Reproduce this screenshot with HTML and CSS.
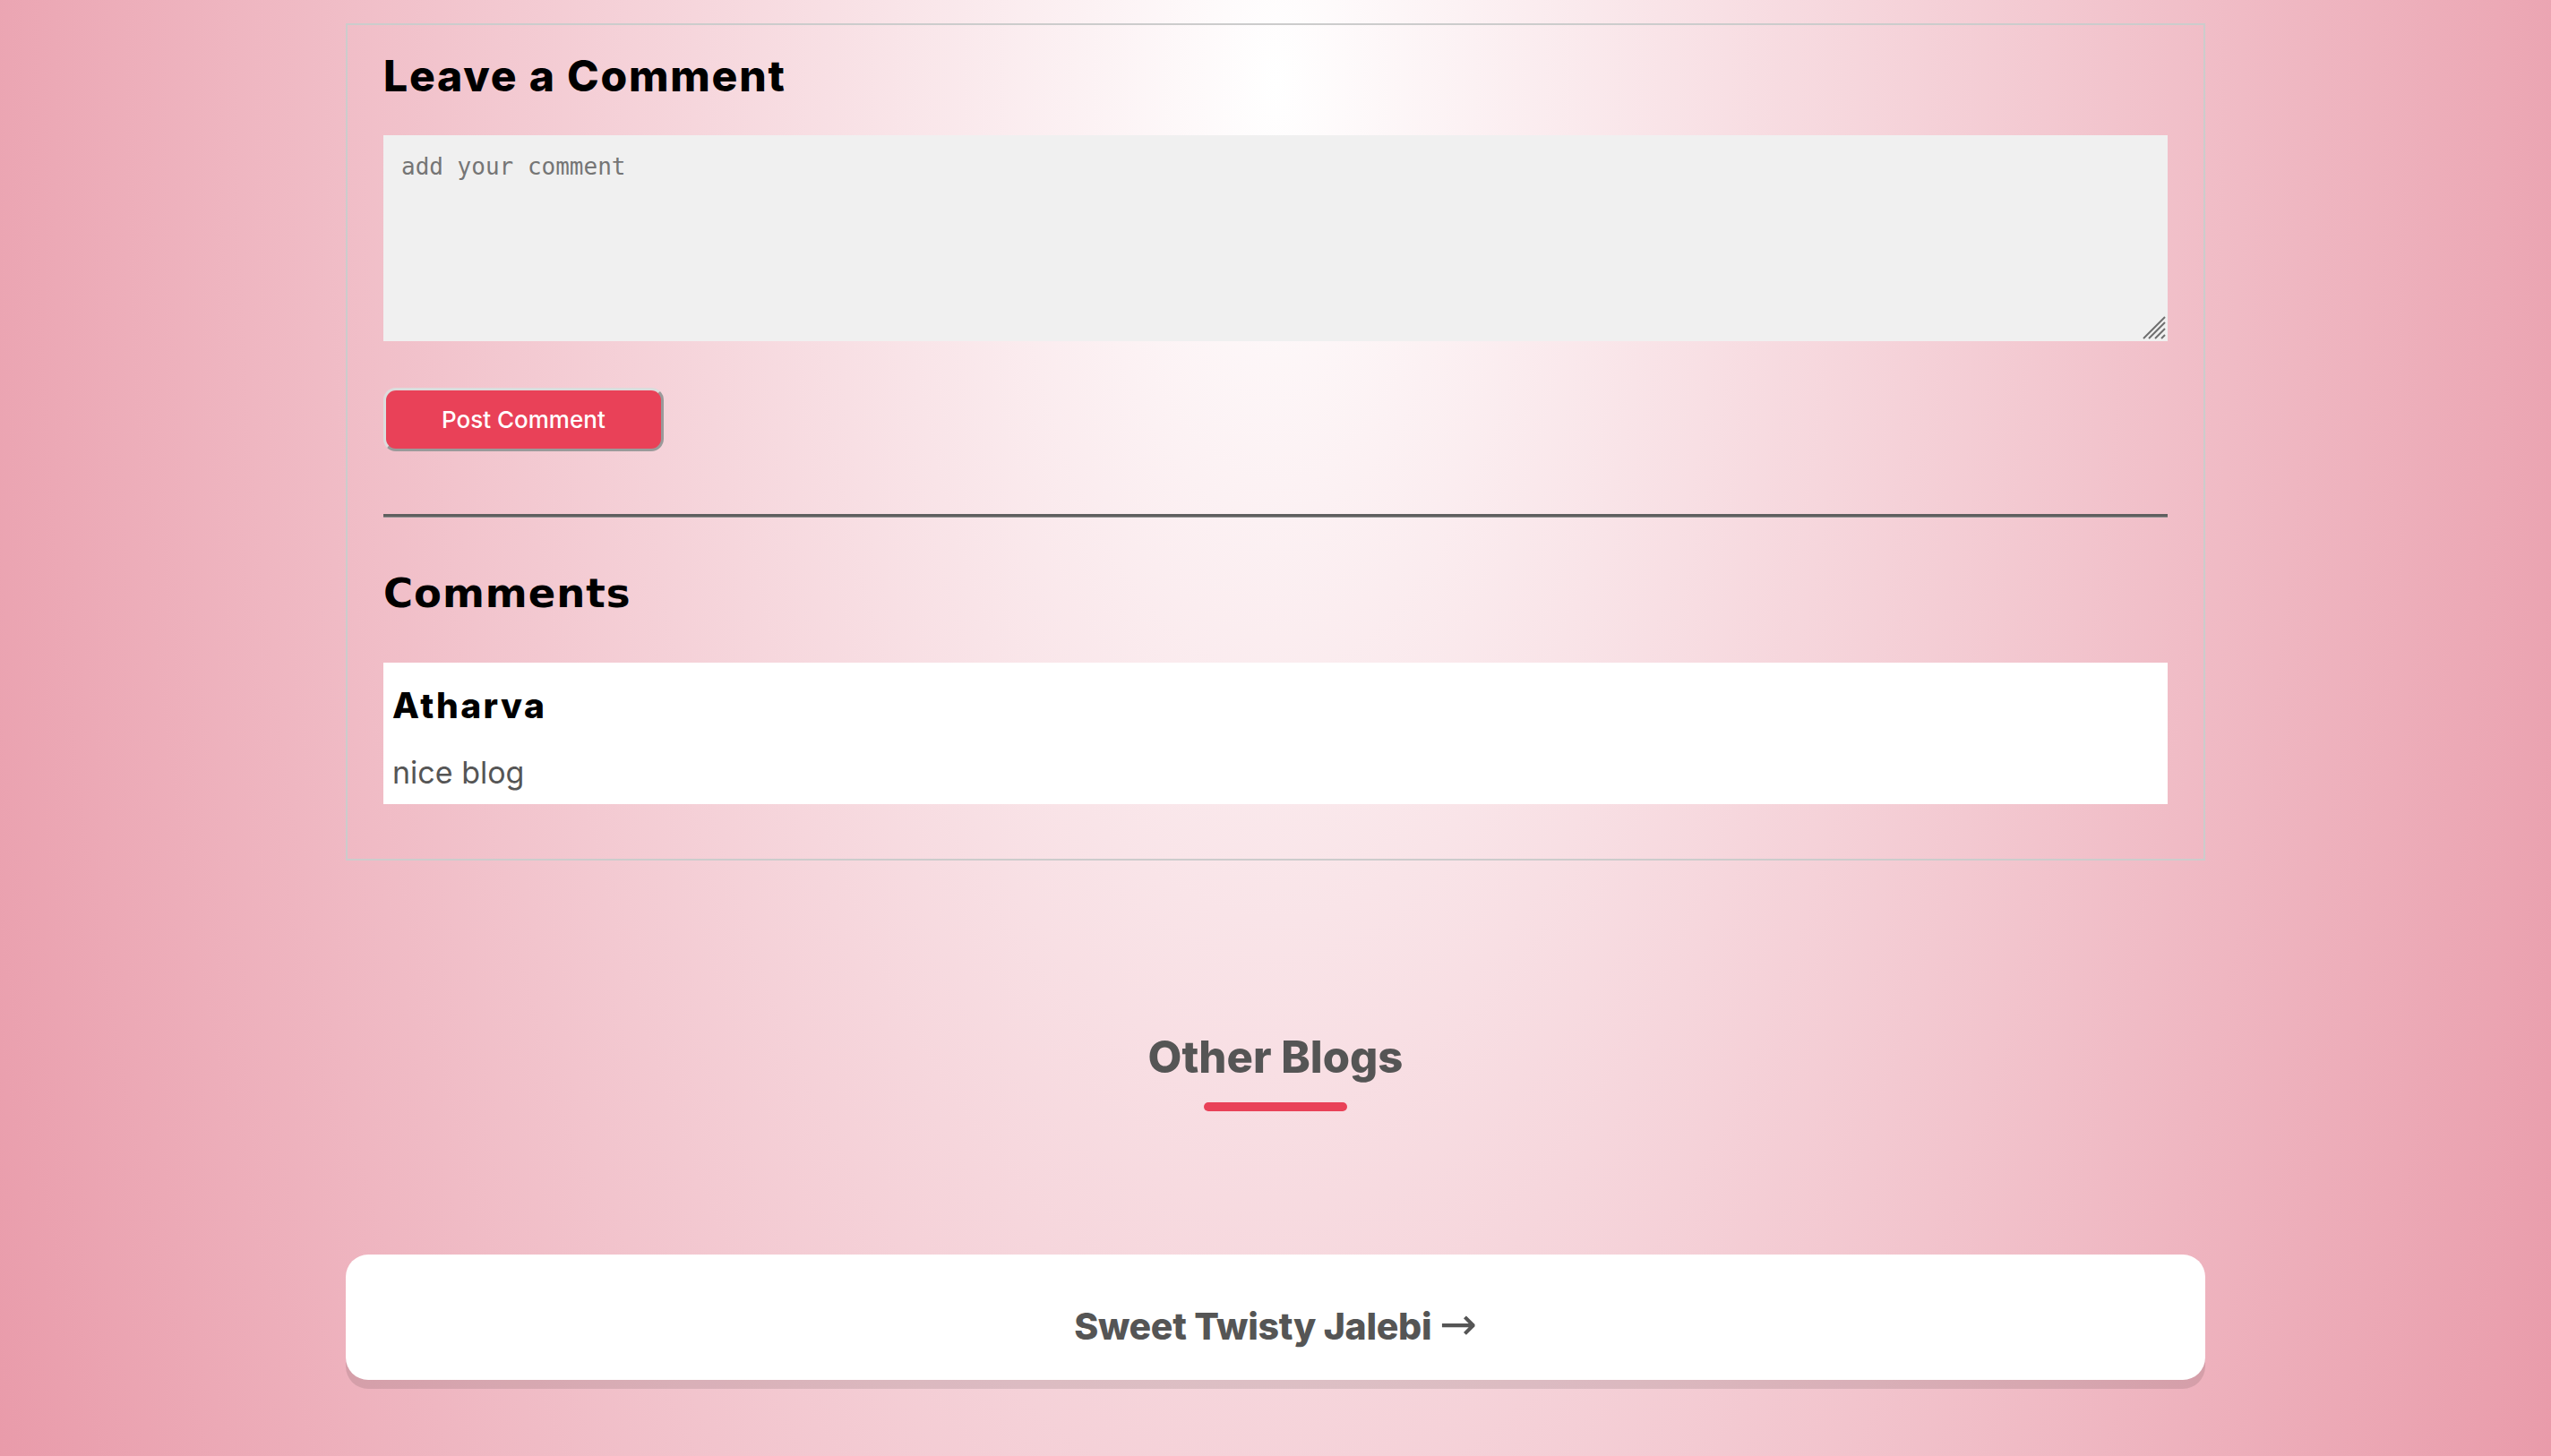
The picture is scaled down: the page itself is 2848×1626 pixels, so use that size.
FILE: index.html
```html
<!DOCTYPE html>
<html>
<head>
    <meta charset="UTF-8">
    <title>Sweet Blog - Comments</title>
    <link rel="stylesheet" href="styles.css">
</head>
<body>
    <div class="page">
        <!-- Comment Section -->
        <section class="comment-box">
            <h2 class="section-title">Leave a Comment</h2>
            <div class="input-wrap">
                <textarea class="comment-input" placeholder="add your comment"></textarea>
                <svg class="grip" width="26" height="26" viewBox="0 0 26 26">
                    <path d="M1 25L25 1M7 25L25 7M14 25L25 14M21 25L25 21" stroke="#6f6f6f" stroke-width="2" fill="none"/>
                </svg>
            </div>
            <button class="post-btn">Post Comment</button>
            <hr class="divider">
            <h2 class="comments-title">Comments</h2>
            <div class="comment-card">
                <h3 class="comment-author">Atharva</h3>
                <p class="comment-text">nice blog</p>
            </div>
        </section>

        <!-- Other Blogs -->
        <section class="other-blogs">
            <h2 class="other-title">Other Blogs</h2>
            <span class="title-bar-line"></span>
            <a class="blog-card" href="#">Sweet Twisty Jalebi <span class="arrow">→</span></a>
        </section>
    </div>
</body>
</html>
```

FILE: styles.css
```css
:root {
    --accent: #e94158;
    --heading: #000000;
    --muted: #555555;
    --input-bg: #f0f0f0;
    --box-border: #cccccc;
}
html, body {
    margin: 0;
    padding: 0;
}
body {
    min-height: 1626px;
    font-family: Inter, "Noto Sans", sans-serif;
    background: radial-gradient(ellipse 2014px 4400px at 50% 90px, #ffffff 0%, #e38093 100%);
    background-color: #eaa2b0;
}
.page {
    width: 2076px;
    margin: 0 auto;
    padding-top: 26px;
}

/* --- Comment box --- */
.comment-box {
    border: 2px solid var(--box-border);
    padding: 28px 40px 61px 40px;
    display: flex;
    flex-direction: column;
}
.section-title {
    margin: 0;
    font-size: 48px;
    line-height: 1.2;
    font-weight: 800;
    letter-spacing: 1.8px;
    color: var(--heading);
}
.input-wrap {
    position: relative;
    margin-top: 37px;
}
.comment-input {
    display: block;
    width: 100%;
    height: 230px;
    box-sizing: border-box;
    border: none;
    padding: 20px;
    background-color: var(--input-bg);
    font-family: "DejaVu Sans Mono", monospace;
    font-size: 26px;
    color: #333;
    outline: none;
    resize: none;
}
.comment-input::placeholder {
    color: #757575;
}
.grip {
    position: absolute;
    right: 2px;
    bottom: 2px;
    pointer-events: none;
}
.post-btn {
    align-self: flex-start;
    margin-top: 52px;
    padding: 17px 62px;
    border: 3px solid;
    border-color: #dcdcdc #9a9a9a #9a9a9a #dcdcdc;
    border-radius: 14px;
    background-color: var(--accent);
    color: #ffffff;
    font-family: Inter, sans-serif;
    font-size: 26px;
    line-height: 31px;
    font-weight: 500;
    cursor: pointer;
}
.divider {
    width: 100%;
    margin: 70px 0 0 0;
    border: none;
    border-top: 3px solid #5f5f5f;
    border-bottom: 1px solid #8f8f8f;
}
.comments-title {
    margin: 58px 0 0 0;
    font-family: "DejaVu Sans", sans-serif;
    font-size: 45px;
    line-height: 1.2;
    font-weight: 700;
    letter-spacing: 1px;
    color: var(--heading);
}
.comment-card {
    margin-top: 50px;
    background-color: #ffffff;
    padding: 25px 10px 14px 10px;
}
.comment-author {
    margin: 0;
    font-size: 39px;
    line-height: 1.2;
    font-weight: 800;
    letter-spacing: 2.5px;
    color: var(--heading);
}
.comment-text {
    margin: 32px 0 0 0;
    font-size: 34px;
    line-height: 1.2;
    color: var(--muted);
}

/* --- Other blogs --- */
.other-blogs {
    display: flex;
    flex-direction: column;
    align-items: center;
    padding-bottom: 60px;
}
.other-title {
    margin: 191px 0 0 0;
    font-size: 49px;
    line-height: 1.2;
    font-weight: 800;
    color: var(--muted);
}
.title-bar-line {
    display: block;
    width: 160px;
    height: 10px;
    margin-top: 20px;
    border-radius: 5px;
    background-color: var(--accent);
}
.blog-card {
    align-self: stretch;
    margin-top: 160px;
    padding: 56px 20px 35px 20px;
    background-color: #ffffff;
    border-radius: 25px;
    box-shadow: 0 10px 0 rgba(0, 0, 0, 0.1);
    text-align: center;
    text-decoration: none;
    font-size: 41px;
    line-height: 49px;
    font-weight: 800;
    letter-spacing: -0.3px;
    color: var(--muted);
}
.blog-card .arrow {
    font-family: "DejaVu Sans", sans-serif;
    font-size: 50px;
    line-height: 0;
    font-weight: 400;
    letter-spacing: 0;
}
```
